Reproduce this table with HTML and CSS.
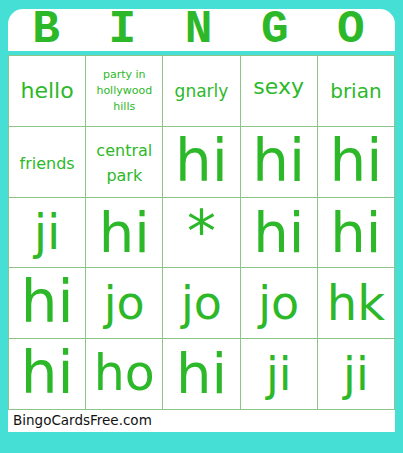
FILE: index.html
```html
<!DOCTYPE html>
<html>
<head>
<meta charset="utf-8">
<link rel="stylesheet" href="styles.css">
</head>
<body>
<div class="card">
  <div class="header">
    <span>B</span><span>I</span><span>N</span><span>G</span><span>O</span>
  </div>
  <div class="grid">
    <div class="cell s23">hello</div>
    <div class="cell s11">party in hollywood hills</div>
    <div class="cell s17">gnarly</div>
    <div class="cell s23 up">sexy</div>
    <div class="cell s20">brian</div>

    <div class="cell s16">friends</div>
    <div class="cell s16">central park</div>
    <div class="cell s58">hi</div>
    <div class="cell s58">hi</div>
    <div class="cell s58">hi</div>

    <div class="cell s48">ji</div>
    <div class="cell s56">hi</div>
    <div class="cell s58">*</div>
    <div class="cell s56">hi</div>
    <div class="cell s56">hi</div>

    <div class="cell s58">hi</div>
    <div class="cell s46">jo</div>
    <div class="cell s46">jo</div>
    <div class="cell s46">jo</div>
    <div class="cell s48">hk</div>

    <div class="cell s58">hi</div>
    <div class="cell s49">ho</div>
    <div class="cell s56">hi</div>
    <div class="cell s46">ji</div>
    <div class="cell s46">ji</div>
  </div>
  <div class="footer">BingoCardsFree.com</div>
</div>
</body>
</html>
```
FILE: styles.css
```css
html, body {
  margin: 0;
  padding: 0;
  background: #46dfd6;
}
body {
  width: 403px;
  height: 453px;
  overflow: hidden;
}
.card {
  width: 387px;
  margin: 9px 0 0 8px;
}
.header {
  height: 42px;
  background: #fff;
  border-radius: 15px 15px 0 0;
  display: grid;
  grid-template-columns: repeat(5, 1fr);
  align-items: center;
  justify-items: center;
  font-family: "Liberation Mono", monospace;
  font-weight: bold;
  font-size: 46px;
  line-height: 42px;
  color: #2db82a;
  margin-bottom: 4px;
  padding-right: 6px;
  box-sizing: border-box;
}
.grid {
  display: grid;
  grid-template-columns: repeat(5, 1fr);
  grid-template-rows: repeat(5, 70.8px);
  background: #fff;
  border-top: 1px solid #8cc48a;
  border-left: 1px solid #8cc48a;
}
.cell {
  border-right: 1px solid #8cc48a;
  border-bottom: 1px solid #8cc48a;
  display: flex;
  align-items: center;
  justify-content: center;
  text-align: center;
  font-family: "DejaVu Sans", sans-serif;
  color: #2db82a;
  line-height: 1.1;
  padding: 0 3px;
}
.up { padding-bottom: 8px; }
.s11 { font-size: 11px; line-height: 16px; }
.s16 { font-size: 16px; line-height: 25px; padding-top: 3px; }
.s17 { font-size: 17px; }
.s20 { font-size: 20px; }
.s23 { font-size: 22px; }
.s46 { font-size: 46px; }
.s48 { font-size: 48px; }
.s49 { font-size: 49px; }
.s56 { font-size: 56px; }
.s58 { font-size: 58px; }
.footer {
  background: #fff;
  height: 22px;
  font-family: "DejaVu Sans", sans-serif;
  font-size: 13.5px;
  line-height: 20px;
  padding-left: 5px;
  color: #111;
}
```
